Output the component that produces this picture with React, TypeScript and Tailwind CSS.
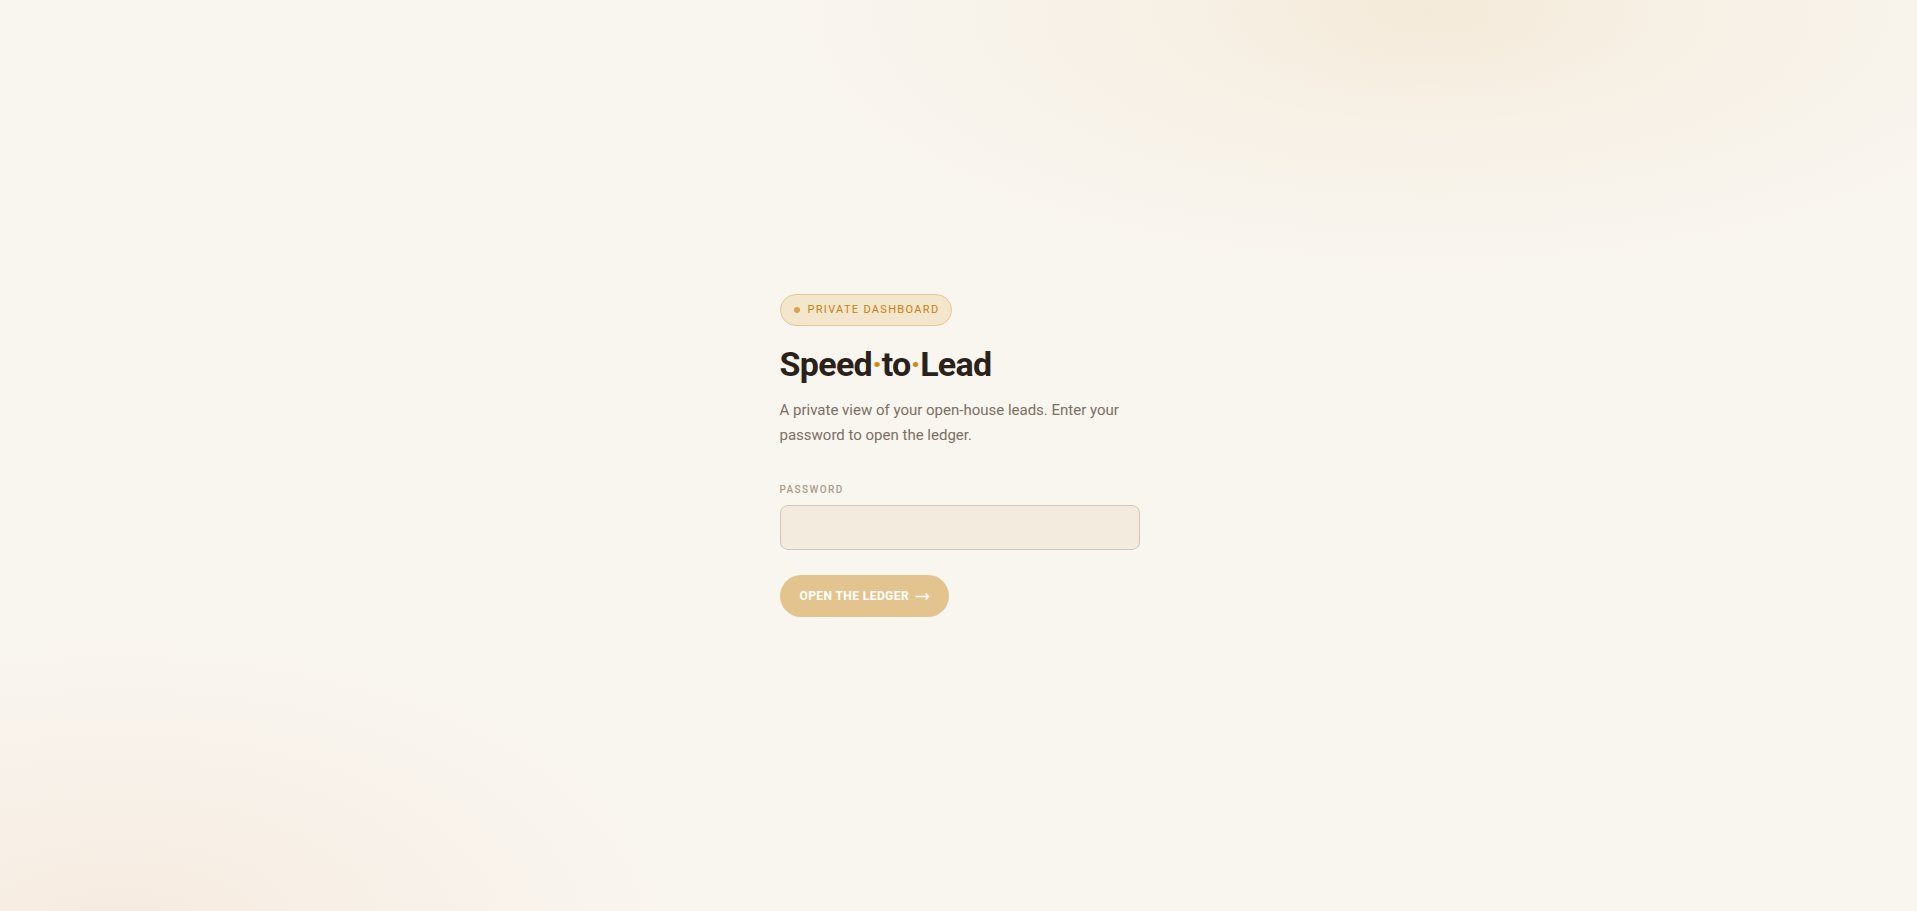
import React from "react";

export default function App() {
  return (
    <div
      className="relative min-h-screen h-[911px] w-full overflow-hidden bg-[#f9f5ef] bg-[radial-gradient(ellipse_640px_260px_at_1430px_10px,#f4ead9_0%,rgba(246,238,224,0.6)_45%,rgba(249,245,239,0)_100%),radial-gradient(ellipse_560px_300px_at_120px_940px,#f6eadf_0%,rgba(247,238,228,0.6)_50%,rgba(249,245,239,0)_100%)] flex items-center justify-center"
      style={{ fontFamily: "Roboto, 'Noto Sans', sans-serif" }}
    >
      <div className="w-[360px] flex flex-col items-start translate-x-[1px]">
        <div className="h-[32px] pl-[13px] pr-[12px] rounded-full border border-[#e6c98f] bg-[#f4e6cd] flex items-center gap-[8px]">
          <span className="w-[6px] h-[6px] rounded-full bg-[#d9a24f]" />
          <span className="text-[11px] font-normal tracking-[0.12em] text-[#c4820f]">
            PRIVATE DASHBOARD
          </span>
        </div>

        <h1 className="mt-[18px] text-[34px] leading-[40px] font-bold tracking-[-0.02em] text-[#2a211a]">
          Speed<span className="text-[#d08a12]">·</span>to<span className="text-[#d08a12]">·</span>Lead
        </h1>

        <p className="mt-[14px] text-[15px] leading-[25px] text-[#7b7062]">
          A private view of your open-house leads. Enter your password to open the ledger.
        </p>

        <label className="mt-[35px] text-[10px] leading-[14px] font-medium tracking-[0.14em] text-[#a89d8c]">
          PASSWORD
        </label>

        <input
          type="password"
          className="mt-[8px] w-full h-[45px] rounded-[8px] border border-[#d2c6b3] bg-[#f4ebdf] px-[14px] text-[15px] outline-none"
        />

        <button className="mt-[25px] h-[42px] pl-[20px] pr-[19px] rounded-full bg-[#e3c48f] text-white text-[12px] font-bold tracking-[0.035em] flex items-center gap-[6px]">
          OPEN THE LEDGER
          <svg width="15" height="8" viewBox="0 0 15 8" fill="none" stroke="white" strokeWidth="1.4" strokeLinecap="round" strokeLinejoin="round">
            <path d="M1 4.5h12.5" />
            <path d="M11 2l2.5 2.5L11 7" />
          </svg>
        </button>
      </div>
    </div>
  );
}
